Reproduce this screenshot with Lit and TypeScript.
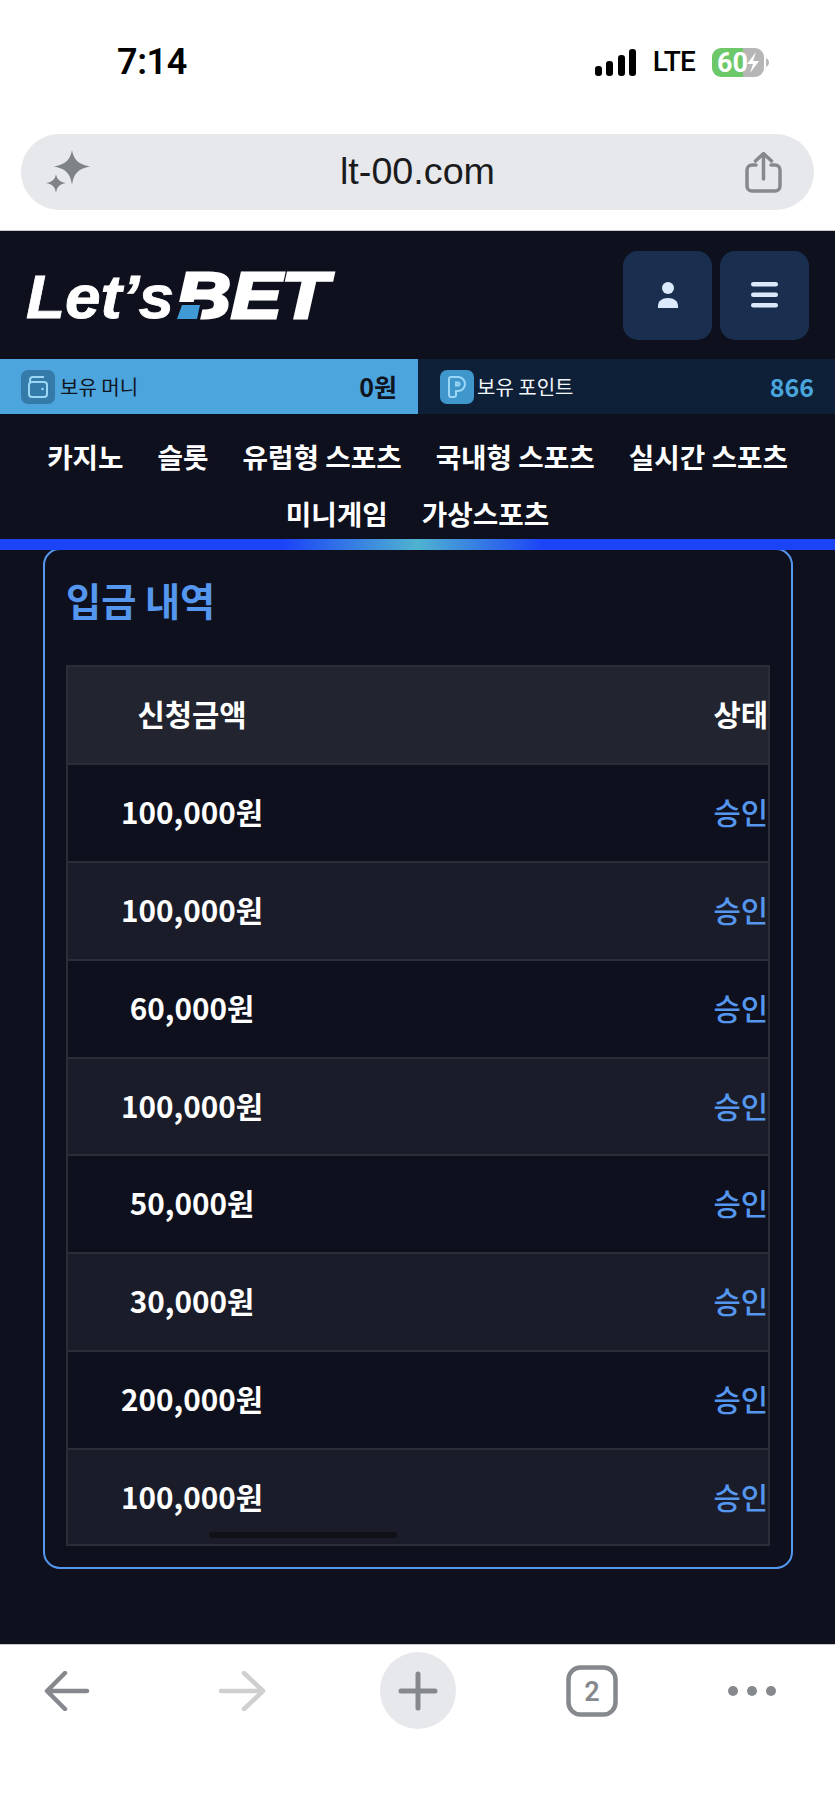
import { LitElement, html, css } from "lit";
import { customElement } from "lit/decorators.js";

const AMOUNTS = ["100,000원", "100,000원", "60,000원", "100,000원", "50,000원", "30,000원", "200,000원", "100,000원"];
const NAV = ["카지노", "슬롯", "유럽형 스포츠", "국내형 스포츠", "실시간 스포츠", "미니게임", "가상스포츠"];

@customElement("app-root")
export class AppRoot extends LitElement {
  static styles = css`
    :host {
      display: flex;
      flex-direction: column;
      width: 835px;
      height: 1810px;
      overflow: hidden;
      background: #0e111d;
      font-family: "Noto Sans CJK KR", "Noto Sans", sans-serif;
      color: #fff;
    }
    svg { display: block; flex: none; }

    .chrome { height: 231px; box-sizing: border-box; background: #fff; border-bottom: 1px solid #c9c9c9; flex: none; }
    .status { height: 124px; display: flex; align-items: center; padding: 0 66px 0 117px; color: #000; }
    .time { font-family: Roboto, sans-serif; font-weight: 600; font-size: 36px; line-height: 1; letter-spacing: -0.4px; flex: 1; }
    .signal { margin-right: 15px; }
    .lte { font-family: Roboto, sans-serif; font-size: 28px; font-weight: 500; line-height: 1; margin-right: 15px; padding: 0 2px; letter-spacing: -0.8px; white-space: nowrap; }
    .battery-text { font: 700 27px Roboto, sans-serif; fill: #fff; }
    .url {
      margin: 10px 21px 0;
      height: 76px;
      border-radius: 38px;
      background: #e7e8ec;
      display: grid;
      grid-template-columns: 1fr auto 1fr;
      align-items: center;
      padding: 0 32px;
      color: #1b1b1d;
      font: 400 37.700px "Liberation Sans", Arial, sans-serif;
    }
    .url .host { padding-bottom: 2px; }
    .url .spark { margin-left: -8px; }
    .url .share { justify-self: end; }

    .header { height: 128px; flex: none; display: flex; align-items: center; justify-content: space-between; padding: 0 26px 0 24px; }
    .logo { overflow: visible; }
    .logo-a { font: italic 700 61px "Liberation Sans", Arial, sans-serif; fill: #fff; stroke: #fff; stroke-width: 0.8px; }
    .logo-b { font: italic 700 64px "Liberation Sans", Arial, sans-serif; fill: #fff; stroke: #fff; stroke-width: 3px; stroke-linejoin: miter; }
    .btns { display: flex; gap: 8px; }
    .btn { width: 89px; height: 89px; border-radius: 15px; background: #1a2f50; display: grid; place-items: center; }

    .balance { height: 55px; flex: none; display: flex; }
    .money, .points { display: flex; align-items: center; box-sizing: border-box; font-size: 20px; }
    .money { width: 418px; background: #4ca5dc; color: #10141f; padding: 0 21px 0 21px; }
    .points { flex: 1; background: #0e2038; color: #f2f6fb; padding: 0 21px 0 22px; }
    .bal-icon { width: 34px; height: 34px; border-radius: 7px; display: grid; place-items: center; flex: none; }
    .money .bal-icon { background: #347ba9; margin-right: 5px; }
    .points .bal-icon { background: #3f97cc; margin-right: 3px; }
    .bal-label { flex: 1; line-height: 1; white-space: nowrap; }
    .bal-val { font-size: 25px; line-height: 1; font-weight: 700; }
    .points .bal-val { color: #4aa5dc; font-weight: 600; }

    nav {
      height: 125px; box-sizing: border-box; flex: none;
      display: flex; flex-wrap: wrap; justify-content: center; align-content: flex-start;
      column-gap: 34px; row-gap: 12px; padding-top: 20px;
      font-size: 27.700px; font-weight: 700; line-height: 45px;
    }
    .bar { position: relative; z-index: 1; height: 11px; flex: none; background: linear-gradient(90deg, #1c44f7 0, #1c44f7 34%, #4fb3d0 50%, #1c44f7 65%, #1c44f7 100%); }

    main { flex: 1; min-height: 0; padding: 0 42px 0 43px; }
    .card {
      box-sizing: border-box; height: 1021px; margin-top: -2px;
      border: 2px solid #5596ee; border-radius: 17px;
      padding: 25px 21px 21px;
      display: flex; flex-direction: column;
    }
    h2 { margin: 0 0 40px; font-size: 38.200px; line-height: 50px; font-weight: 700; color: #5596ee; }
    .table {
      position: relative; flex: 1; min-height: 0; box-sizing: border-box; overflow: hidden;
      border: 2px solid #2b2e39;
      display: grid; grid-template-rows: repeat(9, 97.900px);
      font-size: 29.700px; font-weight: 600;
    }
    .row {
      display: grid; grid-template-columns: 248px 1fr; align-items: center;
      border-bottom: 2px solid #2b2e39; box-sizing: border-box; padding-bottom: 3px;
    }
    .row.head { background: #22252f; }
    .row.even { background: #1a1d29; }
    .amt { text-align: center; }
    .st { text-align: right; }
    .st.ok { color: #5596ee; font-weight: 500; }
    .thumb { position: absolute; left: 141px; bottom: 6px; width: 188px; height: 6px; border-radius: 3px; background: #0f1117; }

    .toolbar {
      height: 166px; flex: none; box-sizing: border-box; background: #fff; border-top: 1px solid #c9c9c9;
      display: grid; grid-template-columns: 134px 216px 136px 212px 108px; grid-template-rows: 77px;
      padding-top: 7px; justify-items: center; align-items: center;
    }
    .plus { width: 76px; height: 77px; border-radius: 50%; background: #e7e8ec; display: grid; place-items: center; }
    .tabs-n { font: 600 27px Roboto, sans-serif; fill: #85898d; }
  `;

  private row(amount: string, i: number) {
    return html`<div class="row ${i % 2 ? "even" : ""}">
      <div class="amt">${amount}</div>
      <div class="st ok">승인</div>
    </div>`;
  }

  render() {
    return html`
      <div class="chrome">
        <div class="status">
          <div class="time">7:14</div>
          <svg class="signal" width="41" height="27" viewBox="0 0 41 27" fill="#000">
            <rect x="0" y="17" width="7" height="10" rx="3"/>
            <rect x="11" y="12" width="7" height="15" rx="3"/>
            <rect x="23" y="6" width="7" height="21" rx="3"/>
            <rect x="34" y="0" width="7" height="27" rx="3"/>
          </svg>
          <div class="lte">LTE</div>
          <svg width="57" height="29" viewBox="0 0 57 29">
            <defs><clipPath id="bat"><rect width="52" height="29" rx="9"/></clipPath></defs>
            <g clip-path="url(#bat)">
              <rect width="31" height="29" fill="#6cc868"/>
              <rect x="31" width="21" height="29" fill="#b6b6b6"/>
            </g>
            <path d="M54 10c2 1 3 3 3 4.500s-1 3.500-3 4.500z" fill="#b6b6b6"/>
            <text class="battery-text" x="5" y="24">60</text>
            <path d="M44 4 35 16h6l-3 9 9-12h-6z" fill="#fff"/>
          </svg>
        </div>
        <div class="url">
          <svg class="spark" width="46" height="48" viewBox="0 0 46 48" fill="#7e8388">
            <path d="M27 2c1.500 9 6 14.500 18 16.500-12 2-16.500 7.500-18 18.500-1.500-11-6-16.500-18-18.500 12-2 16.500-7.500 18-16.500z"/>
            <path d="M11 26c.8 5 3.500 8 10 9-6.500 1-9.200 4-10 10-.8-6-3.500-9-10-10 6.500-1 9.200-4 10-9z"/>
          </svg>
          <div class="host">lt-00.com</div>
          <svg class="share" width="37" height="41" viewBox="0 0 37 41" fill="none" stroke="#85898d" stroke-width="3.500">
            <path d="M11 13H7a5 5 0 0 0-5 5v16a5 5 0 0 0 5 5h23a5 5 0 0 0 5-5V18a5 5 0 0 0-5-5h-4" stroke-linecap="round"/>
            <path d="M18.500 27V2M10.500 9l8-7.500 8 7.500" stroke-linecap="round" stroke-linejoin="round"/>
          </svg>
        </div>
      </div>

      <div class="header">
        <svg class="logo" width="312" height="56" viewBox="0 0 312 56">
          <text class="logo-a" x="2" y="51" textLength="148" lengthAdjust="spacingAndGlyphs">Let’s</text>
          <text class="logo-b" x="152" y="51" textLength="152" lengthAdjust="spacingAndGlyphs">BET</text>
          <path d="M155 35H180L176 53H149z" fill="#0e111d"/>
          <path d="M158 38H176L173 52H153z" fill="#3f9ad6"/>
        </svg>
        <div class="btns">
          <div class="btn">
            <svg width="20" height="26" viewBox="0 0 20 26" fill="#dbe9fb">
              <circle cx="10" cy="6" r="6"/>
              <path d="M0 26v-2c0-5 4-8 10-8s10 3 10 8v2z"/>
            </svg>
          </div>
          <div class="btn">
            <svg width="27" height="26" viewBox="0 0 27 26" fill="#dbe9fb">
              <rect y="0" width="27" height="4.500" rx="2.200"/>
              <rect y="10.500" width="27" height="4.500" rx="2.200"/>
              <rect y="21" width="27" height="4.500" rx="2.200"/>
            </svg>
          </div>
        </div>
      </div>

      <div class="balance">
        <div class="money">
          <div class="bal-icon">
            <svg width="22" height="22" viewBox="0 0 22 22" fill="none" stroke="#9ad6f5" stroke-width="2">
              <path d="M3 6V4a3 3 0 0 1 3-3h11"/>
              <rect x="2" y="6" width="18" height="15" rx="3"/>
              <circle cx="15.500" cy="13" r="1.300" fill="#9ad6f5" stroke="none"/>
            </svg>
          </div>
          <div class="bal-label">보유 머니</div>
          <div class="bal-val">0원</div>
        </div>
        <div class="points">
          <div class="bal-icon">
            <svg width="20" height="24" viewBox="0 0 20 24" fill="none" stroke="#9ad6f5" stroke-width="2">
              <path d="M2 4a2 2 0 0 1 2-2h7a7 7 0 0 1 0 14H9v4a2 2 0 0 1-2 2H4a2 2 0 0 1-2-2z"/>
              <path d="M9 7.500h2a1.500 1.500 0 0 1 0 3H9z"/>
            </svg>
          </div>
          <div class="bal-label">보유 포인트</div>
          <div class="bal-val">866</div>
        </div>
      </div>

      <nav>${NAV.map((n) => html`<div>${n}</div>`)}</nav>
      <div class="bar"></div>

      <main>
        <div class="card">
          <h2>입금 내역</h2>
          <div class="table">
            <div class="row head"><div class="amt">신청금액</div><div class="st">상태</div></div>
            ${AMOUNTS.map((a, i) => this.row(a, i))}
            <div class="thumb"></div>
          </div>
        </div>
      </main>

      <div class="toolbar">
        <svg width="46" height="40" viewBox="0 0 46 40" fill="none" stroke="#85898d" stroke-width="4.500" stroke-linecap="round" stroke-linejoin="round">
          <path d="M43 20H4M21 2 3 20l18 18"/>
        </svg>
        <svg width="48" height="40" viewBox="0 0 48 40" fill="none" stroke="#cfcfcf" stroke-width="4.500" stroke-linecap="round" stroke-linejoin="round">
          <path d="M3 20h41M26 2l19 18-19 18"/>
        </svg>
        <div class="plus">
          <svg width="40" height="40" viewBox="0 0 40 40" fill="none" stroke="#85898d" stroke-width="5" stroke-linecap="round">
            <path d="M20 3v34M3 20h34"/>
          </svg>
        </div>
        <svg width="52" height="52" viewBox="0 0 52 52" fill="none">
          <rect x="2.500" y="2.500" width="47" height="47" rx="12" stroke="#85898d" stroke-width="4.500"/>
          <text class="tabs-n" x="26" y="36" text-anchor="middle">2</text>
        </svg>
        <svg width="48" height="12" viewBox="0 0 48 12" fill="#85898d">
          <circle cx="5" cy="6" r="5"/><circle cx="24" cy="6" r="5"/><circle cx="43" cy="6" r="5"/>
        </svg>
      </div>
    `;
  }
}
